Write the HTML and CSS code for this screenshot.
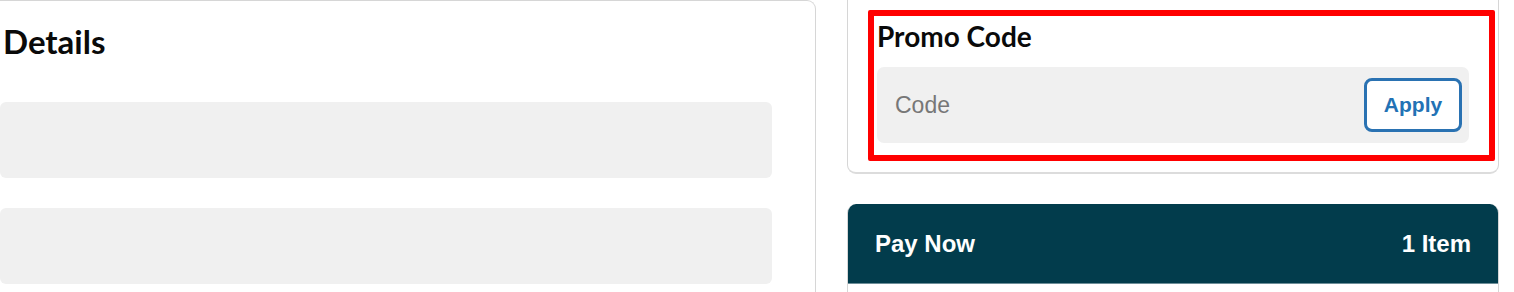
FILE: index.html
```html
<!DOCTYPE html>
<html lang="en">
<head>
<meta charset="utf-8">
<title>Checkout</title>
<link rel="stylesheet" href="styles.css">
</head>
<body>
<div class="page">
  <section class="details-card">
    <h1 class="details-title">Details</h1>
    <div class="field"></div>
    <div class="field"></div>
  </section>
  <aside class="sidebar">
    <section class="promo-card">
      <div class="highlight">
        <h2 class="promo-title">Promo Code</h2>
        <div class="promo-input">
          <input class="code-input" type="text" placeholder="Code">
          <button class="apply-btn" type="button">Apply</button>
        </div>
      </div>
    </section>
    <section class="pay-card">
      <div class="pay-header">
        <span class="pay-title">Pay Now</span>
        <span class="pay-count">1 Item</span>
      </div>
      <div class="pay-body"></div>
    </section>
  </aside>
</div>
</body>
</html>
```
FILE: styles.css
```css
html, body {
  margin: 0;
  padding: 0;
  background: #ffffff;
  overflow: hidden;
}

.page {
  display: flex;
  align-items: flex-start;
  gap: 31px;
  width: 1514px;
  height: 292px;
  overflow: hidden;
}

.details-card {
  width: 772px;
  flex: none;
  padding: 20px 43px 40px 0;
  border-top: 1px solid #d6d6d6;
  border-right: 1px solid #d6d6d6;
  border-top-right-radius: 9px;
  display: flex;
  flex-direction: column;
  gap: 30px;
}

.details-title {
  margin: 0 0 11px 0;
  padding-left: 3px;
  font-family: "Lato", "DejaVu Sans", sans-serif;
  font-weight: 700;
  font-size: 33px;
  line-height: 40px;
  color: #0a0a0a;
}

.field {
  height: 76px;
  background: #f0f0f0;
  border-radius: 6px;
}

.sidebar {
  width: 652px;
  flex: none;
  display: flex;
  flex-direction: column;
  gap: 30px;
}

.promo-card {
  border: 1px solid #d6d6d6;
  border-top: none;
  border-bottom: 2px solid #dcdcdc;
  border-radius: 0 0 9px 9px;
  padding: 10px 3px 11px 20px;
}

.highlight {
  border: 6px solid #ff0000;
  border-radius: 2px;
  padding: 3px 20px 12px 3px;
}

.promo-title {
  margin: 0 0 14px 0;
  font-family: "Lato", "DejaVu Sans", sans-serif;
  font-weight: 700;
  font-size: 28px;
  line-height: 34px;
  color: #0a0a0a;
}

.promo-input {
  height: 76px;
  background: #f0f0f0;
  border-radius: 7px;
  display: flex;
  align-items: center;
  padding: 0 7px 0 18px;
  gap: 10px;
}

.code-input {
  flex: 1;
  min-width: 0;
  border: none;
  outline: none;
  background: transparent;
  padding: 0;
  font-family: "Liberation Sans", Arial, sans-serif;
  font-size: 23px;
  color: #333;
}

.code-input::placeholder {
  color: #777777;
}

.apply-btn {
  width: 98px;
  height: 54px;
  flex: none;
  background: #ffffff;
  border: 3px solid #2a72b2;
  border-radius: 8px;
  font-family: "Liberation Sans", Arial, sans-serif;
  font-weight: 700;
  font-size: 21px;
  color: #2272b5;
  padding: 0;
}

.pay-card {
  border-radius: 9px 9px 0 0;
  overflow: hidden;
  border-left: 1px solid #d6d6d6;
  border-right: 1px solid #d6d6d6;
}

.pay-header {
  height: 79px;
  background: #023c4c;
  display: flex;
  align-items: center;
  justify-content: space-between;
  padding: 0 27px 0 27px;
  border-bottom: 1px solid #6d8e98;
  font-family: "Liberation Sans", Arial, sans-serif;
  font-weight: 700;
  font-size: 24px;
  color: #ffffff;
}

.pay-body {
  height: 60px;
  background: #ffffff;
}
```
